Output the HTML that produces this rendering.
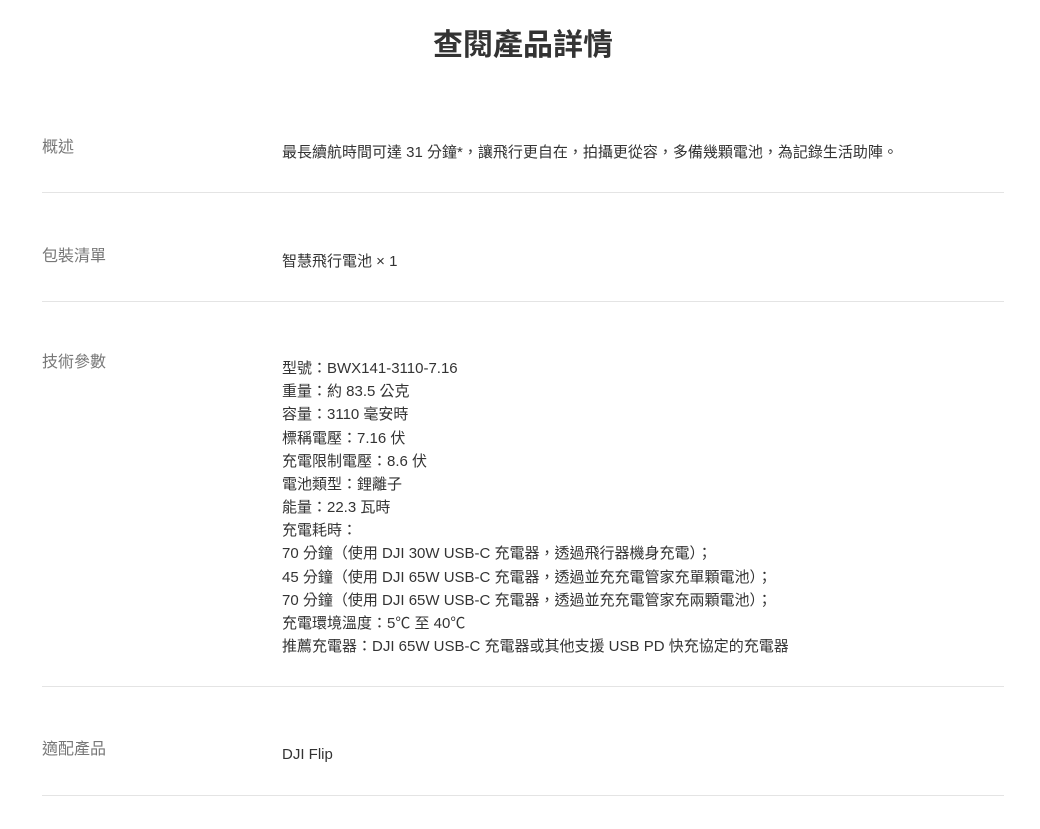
<!DOCTYPE html>
<html><head><meta charset="utf-8">
<style>
html,body{margin:0;padding:0;background:#fff;}
body{width:1040px;height:829px;position:relative;overflow:hidden;font-family:"Liberation Sans","Noto Sans CJK TC",sans-serif;}
.t{position:absolute;left:0;width:1046px;text-align:center;top:27px;font-size:30px;font-weight:bold;color:#333;line-height:38px;}
.l{position:absolute;left:42px;font-size:16px;color:#777;line-height:22px;}
.v{position:absolute;left:282px;font-size:15px;color:#333;line-height:23.17px;white-space:nowrap;}
.v span{font-size:14px;}
.hr{position:absolute;left:42px;width:962px;height:1px;background:#e4e4e4;}
</style></head><body>
<div class="t">查閱產品詳情</div>

<div class="l" style="top:137px">概述</div>
<div class="v" style="top:141px">最長續航時間可達 31 分鐘*，讓飛行更自在，拍攝更從容，多備幾顆電池，為記錄生活助陣。</div>
<div class="hr" style="top:192px"></div>

<div class="l" style="top:246px">包裝清單</div>
<div class="v" style="top:250px">智慧飛行電池 × 1</div>
<div class="hr" style="top:301px"></div>

<div class="l" style="top:352px">技術參數</div>
<div class="v" style="top:357px">型號：BWX141-3110-7.16<br>重量：約 83.5 公克<br>容量：3110 毫安時<br>標稱電壓：7.16 伏<br>充電限制電壓：8.6 伏<br>電池類型：鋰離子<br>能量：22.3 瓦時<br>充電耗時：<br>70 分鐘（使用 DJI 30W USB-C 充電器，透過飛行器機身充電）；<br>45 分鐘（使用 DJI 65W USB-C 充電器，透過並充充電管家充單顆電池）；<br>70 分鐘（使用 DJI 65W USB-C 充電器，透過並充充電管家充兩顆電池）；<br>充電環境溫度：5℃ 至 40℃<br>推薦充電器：DJI 65W USB-C 充電器或其他支援 USB PD 快充協定的充電器</div>
<div class="hr" style="top:686px"></div>

<div class="l" style="top:739px">適配產品</div>
<div class="v" style="top:743px">DJI Flip</div>
<div class="hr" style="top:795px"></div>
</body></html>
